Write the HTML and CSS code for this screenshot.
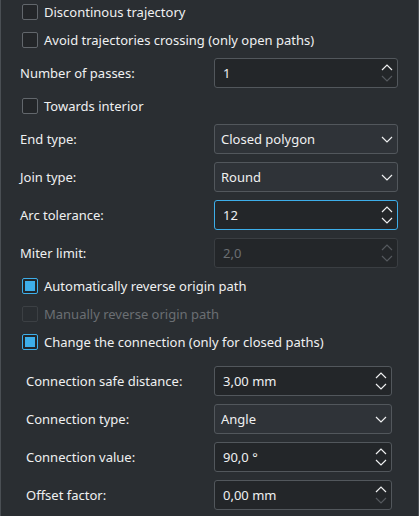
FILE: index.html
```html
<!DOCTYPE html>
<html>
<head>
<meta charset="utf-8">
<link rel="stylesheet" href="styles.css">
</head>
<body>
<div class="panel">
  <div class="check-row"><span class="box"></span><span>Discontinous trajectory</span></div>
  <div class="check-row"><span class="box"></span><span>Avoid trajectories crossing (only open paths)</span></div>
  <div class="field-row">
    <span class="label">Number of passes:</span>
    <div class="field spin"><span class="value">1</span>
      <span class="arrows">
        <svg width="12" height="7" viewBox="0 0 12 7"><polyline points="1,6 6,1 11,6" class="chev"/></svg>
        <svg width="12" height="7" viewBox="0 0 12 7"><polyline points="1,1 6,6 11,1" class="chev dim"/></svg>
      </span>
    </div>
  </div>
  <div class="check-row"><span class="box"></span><span>Towards interior</span></div>
  <div class="field-row">
    <span class="label">End type:</span>
    <div class="field combo"><span class="value">Closed polygon</span>
      <svg width="12" height="7" viewBox="0 0 12 7" class="drop"><polyline points="1,1 6,6 11,1" class="chev"/></svg>
    </div>
  </div>
  <div class="field-row">
    <span class="label">Join type:</span>
    <div class="field combo"><span class="value">Round</span>
      <svg width="12" height="7" viewBox="0 0 12 7" class="drop"><polyline points="1,1 6,6 11,1" class="chev"/></svg>
    </div>
  </div>
  <div class="field-row">
    <span class="label">Arc tolerance:</span>
    <div class="field spin focus"><span class="value">12</span>
      <span class="arrows">
        <svg width="12" height="7" viewBox="0 0 12 7"><polyline points="1,6 6,1 11,6" class="chev"/></svg>
        <svg width="12" height="7" viewBox="0 0 12 7"><polyline points="1,1 6,6 11,1" class="chev"/></svg>
      </span>
    </div>
  </div>
  <div class="field-row">
    <span class="label">Miter limit:</span>
    <div class="field spin off"><span class="value">2,0</span>
      <span class="arrows">
        <svg width="12" height="7" viewBox="0 0 12 7"><polyline points="1,6 6,1 11,6" class="chev dim"/></svg>
        <svg width="12" height="7" viewBox="0 0 12 7"><polyline points="1,1 6,6 11,1" class="chev dim"/></svg>
      </span>
    </div>
  </div>
  <div class="check-row"><span class="box checked"></span><span>Automatically reverse origin path</span></div>
  <div class="check-row disabled"><span class="box off"></span><span>Manually reverse origin path</span></div>
  <div class="check-row"><span class="box checked"></span><span>Change the connection (only for closed paths)</span></div>
  <div class="sub">
    <div class="field-row">
      <span class="label">Connection safe distance:</span>
      <div class="field spin"><span class="value">3,00 mm</span>
        <span class="arrows">
          <svg width="12" height="7" viewBox="0 0 12 7"><polyline points="1,6 6,1 11,6" class="chev"/></svg>
          <svg width="12" height="7" viewBox="0 0 12 7"><polyline points="1,1 6,6 11,1" class="chev"/></svg>
        </span>
      </div>
    </div>
    <div class="field-row">
      <span class="label">Connection type:</span>
      <div class="field combo"><span class="value">Angle</span>
        <svg width="12" height="7" viewBox="0 0 12 7" class="drop"><polyline points="1,1 6,6 11,1" class="chev"/></svg>
      </div>
    </div>
    <div class="field-row">
      <span class="label">Connection value:</span>
      <div class="field spin"><span class="value">90,0 °</span>
        <span class="arrows">
          <svg width="12" height="7" viewBox="0 0 12 7"><polyline points="1,6 6,1 11,6" class="chev"/></svg>
          <svg width="12" height="7" viewBox="0 0 12 7"><polyline points="1,1 6,6 11,1" class="chev"/></svg>
        </span>
      </div>
    </div>
    <div class="field-row">
      <span class="label">Offset factor:</span>
      <div class="field spin"><span class="value">0,00 mm</span>
        <span class="arrows">
          <svg width="12" height="7" viewBox="0 0 12 7"><polyline points="1,6 6,1 11,6" class="chev"/></svg>
          <svg width="12" height="7" viewBox="0 0 12 7"><polyline points="1,1 6,6 11,1" class="chev dim"/></svg>
        </span>
      </div>
    </div>
  </div>
</div>
</body>
</html>
```

FILE: styles.css
```css
html, body {
  margin: 0;
  background: #2a2e32;
}
.panel {
  box-sizing: border-box;
  height: 516px;
  border-left: 1px solid #4a4f54;
  border-right: 1px solid #4a4f54;
  padding: 2px 20px 0 19px;
  display: flex;
  flex-direction: column;
  gap: 8px;
  font-family: "Noto Sans", sans-serif;
  font-size: 13px;
  color: #eff0f1;
  overflow: hidden;
}
.check-row {
  height: 20px;
  display: flex;
  align-items: center;
  gap: 6px;
  padding-left: 2px;
}
.box {
  box-sizing: border-box;
  width: 16px;
  height: 16px;
  border: 1px solid #62676c;
  border-radius: 2px;
  background: #232629;
  flex: none;
  position: relative;
}
.box.checked {
  border-color: #3daee9;
}
.box.checked::after {
  content: "";
  position: absolute;
  left: 2px;
  top: 2px;
  width: 10px;
  height: 10px;
  background: #3daee9;
}
.box.off {
  border-color: #3c4044;
  background: #2a2e32;
}
.disabled {
  color: #6b6f73;
}
.field-row {
  display: grid;
  grid-template-columns: 194px 184px;
  align-items: center;
  height: 30px;
}
.sub {
  padding: 6px 6px 0 6px;
  display: flex;
  flex-direction: column;
  gap: 8px;
}
.sub .field-row {
  grid-template-columns: 188px 178px;
}
.field {
  box-sizing: border-box;
  height: 30px;
  border: 1px solid #52575c;
  border-radius: 3px;
  display: flex;
  align-items: center;
  justify-content: space-between;
  padding: 0 4px 0 8px;
}
.spin {
  background: #232629;
}
.combo {
  background: #2f3338;
  padding-left: 6px;
  padding-right: 4px;
}
.focus {
  border-color: #3daee9;
}
.off {
  border-color: #3a3e42;
  background: #232629;
  color: #6b6f73;
}
.arrows {
  display: flex;
  flex-direction: column;
  gap: 4px;
}
.arrows svg, .drop {
  display: block;
}
.chev {
  fill: none;
  stroke: #eff0f1;
  stroke-width: 1.2;
}
.chev.dim {
  stroke: #55595e;
}
```
